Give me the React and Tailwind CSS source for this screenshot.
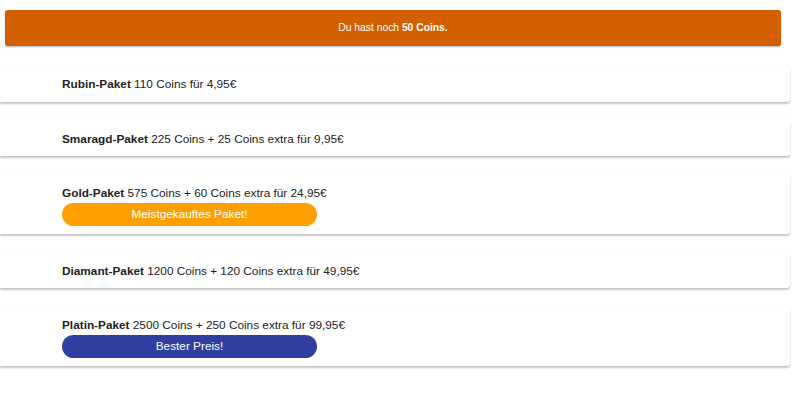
export default function App() {
  const packs = [
    { name: "Rubin-Paket", desc: "110 Coins für 4,95€" },
    { name: "Smaragd-Paket", desc: "225 Coins + 25 Coins extra für 9,95€" },
    { name: "Gold-Paket", desc: "575 Coins + 60 Coins extra für 24,95€", badge: "Meistgekauftes Paket!", color: "bg-[#ffa000]" },
    { name: "Diamant-Paket", desc: "1200 Coins + 120 Coins extra für 49,95€" },
    { name: "Platin-Paket", desc: "2500 Coins + 250 Coins extra für 99,95€", badge: "Bester Preis!", color: "bg-[#303f9f]" },
  ];
  return (
    <div className="w-[800px] h-[400px] bg-white overflow-hidden [font-family:'Liberation_Sans',Arial,sans-serif] text-[#222]">
      <div className="pt-[10px] pl-[5px] pr-[19px]">
        <div className="h-[36px] rounded-[3px] bg-[#d35f00] shadow-[0_1px_2px_rgba(0,0,0,0.3)] flex items-center justify-center text-white text-[10.3px]">
          <span>Du hast noch <b>50 Coins.</b></span>
        </div>
      </div>
      <div className="flex flex-col gap-[18px] pt-[19px] pr-[10px]">
        {packs.map((p) => (
          <div
            key={p.name}
            className={`bg-white rounded-r-[3px] shadow-[0_2px_2px_rgba(0,0,0,0.22),0_0_1px_rgba(0,0,0,0.12)] pl-[62px] pt-[11px] ${p.badge ? "pb-[7.5px]" : "pb-[9.5px]"}`}
          >
            <div className="text-[11.8px] leading-[16px]">
              <b>{p.name}</b> {p.desc}
            </div>
            {p.badge && (
              <div className={`mt-[2px] w-[255px] h-[23px] rounded-full ${p.color} text-white text-[11.8px] flex items-center justify-center`}>
                {p.badge}
              </div>
            )}
          </div>
        ))}
      </div>
    </div>
  );
}
